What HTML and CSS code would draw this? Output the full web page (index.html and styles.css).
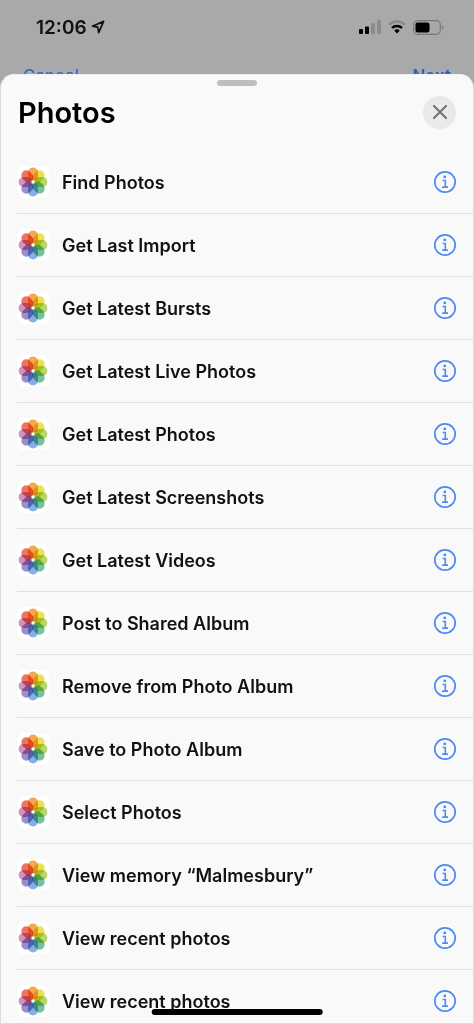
FILE: index.html
```html
<!DOCTYPE html>
<html lang="en">
<head>
  <meta charset="UTF-8" />
  <meta name="viewport" content="width=device-width, initial-scale=1.0"/>
  <title>Photos</title>
  <link rel="stylesheet" href="styles.css">
</head>
<body>
  <svg class="defs" aria-hidden="true">
    <symbol id="photos-icon" viewBox="0 0 32 32">
      <rect width="32" height="32" rx="7" fill="#fff"/>
      <g class="petals">
        <rect x="11" y="1.6" width="10" height="13" rx="5" fill="#f5a850"/>
        <rect x="11" y="1.6" width="10" height="13" rx="5" fill="#ece04e" transform="rotate(45 16 16)"/>
        <rect x="11" y="1.6" width="10" height="13" rx="5" fill="#b9d66c" transform="rotate(90 16 16)"/>
        <rect x="11" y="1.6" width="10" height="13" rx="5" fill="#74c3a0" transform="rotate(135 16 16)"/>
        <rect x="11" y="1.6" width="10" height="13" rx="5" fill="#83b0e6" transform="rotate(180 16 16)"/>
        <rect x="11" y="1.6" width="10" height="13" rx="5" fill="#9c8ec8" transform="rotate(225 16 16)"/>
        <rect x="11" y="1.6" width="10" height="13" rx="5" fill="#cf93bd" transform="rotate(270 16 16)"/>
        <rect x="11" y="1.6" width="10" height="13" rx="5" fill="#ee7566" transform="rotate(315 16 16)"/>
      </g>
    </symbol>
    <symbol id="info-icon" viewBox="0 0 24 24">
      <circle cx="12" cy="12" r="10.2" fill="none" stroke="currentColor" stroke-width="1.7"/>
      <circle cx="11.8" cy="6.9" r="1.4" fill="currentColor"/>
      <path d="M9.6 10.5h2.7v6.6M9.2 17.1h5.8" fill="none" stroke="currentColor" stroke-width="1.6"/>
    </symbol>
  </svg>

  <header class="status-bar">
    <div class="clock">
      <span>12:06</span>
      <svg width="14" height="14" viewBox="0 0 14 14">
        <path d="M12.6 1.4 1.4 6.2l5.4.9.9 5.5z" fill="none" stroke="#111" stroke-width="1.7" stroke-linejoin="round"/>
      </svg>
    </div>
    <div class="indicators">
      <svg width="22" height="14" viewBox="0 0 22 14">
        <rect x="0" y="9" width="4" height="5" rx="1" fill="#000"/>
        <rect x="6" y="6.5" width="4" height="7.5" rx="1" fill="#000"/>
        <rect x="12" y="3" width="4" height="11" rx="1" fill="#8c8c8f"/>
        <rect x="18" y="0" width="4" height="14" rx="1" fill="#8c8c8f"/>
      </svg>
      <svg width="18" height="14" viewBox="0 0 18 14">
        <path d="M1.2 4.6a11.2 11.2 0 0 1 15.6 0" fill="none" stroke="#88888b" stroke-width="2.2"/>
        <path d="M4 8a7.2 7.2 0 0 1 10 0" fill="none" stroke="#000" stroke-width="2.4"/>
        <path d="M6.3 10.6a4 4 0 0 1 5.4 0L9 13.6z" fill="#000"/>
      </svg>
      <svg width="31" height="15" viewBox="0 0 31 15">
        <rect x="0.7" y="0.7" width="26.6" height="13.6" rx="4" fill="none" stroke="#77777a" stroke-width="1.2"/>
        <rect x="2.5" y="2.5" width="14" height="10" rx="2" fill="#000"/>
        <path d="M29 5.2v4.6q1.6-.8 1.6-2.3T29 5.2z" fill="#77777a"/>
      </svg>
    </div>
  </header>

  <nav class="nav-bar">
    <a href="#">Cancel</a>
    <a href="#" class="next">Next</a>
  </nav>

  <main class="sheet">
    <div class="grabber"></div>
    <div class="sheet-header">
      <h1>Photos</h1>
      <button class="close" aria-label="Close">
        <svg width="16" height="16" viewBox="0 0 16 16">
          <path d="M2 2l12 12M14 2L2 14" stroke="#77777a" stroke-width="2.2" stroke-linecap="round"/>
        </svg>
      </button>
    </div>

    <ul class="actions">
      <li>
        <button class="action"><svg class="app-icon"><use href="#photos-icon"/></svg>Find Photos</button>
        <button class="info" aria-label="Info"><svg><use href="#info-icon"/></svg></button>
      </li>
      <li>
        <button class="action"><svg class="app-icon"><use href="#photos-icon"/></svg>Get Last Import</button>
        <button class="info" aria-label="Info"><svg><use href="#info-icon"/></svg></button>
      </li>
      <li>
        <button class="action"><svg class="app-icon"><use href="#photos-icon"/></svg>Get Latest Bursts</button>
        <button class="info" aria-label="Info"><svg><use href="#info-icon"/></svg></button>
      </li>
      <li>
        <button class="action"><svg class="app-icon"><use href="#photos-icon"/></svg>Get Latest Live Photos</button>
        <button class="info" aria-label="Info"><svg><use href="#info-icon"/></svg></button>
      </li>
      <li>
        <button class="action"><svg class="app-icon"><use href="#photos-icon"/></svg>Get Latest Photos</button>
        <button class="info" aria-label="Info"><svg><use href="#info-icon"/></svg></button>
      </li>
      <li>
        <button class="action"><svg class="app-icon"><use href="#photos-icon"/></svg>Get Latest Screenshots</button>
        <button class="info" aria-label="Info"><svg><use href="#info-icon"/></svg></button>
      </li>
      <li>
        <button class="action"><svg class="app-icon"><use href="#photos-icon"/></svg>Get Latest Videos</button>
        <button class="info" aria-label="Info"><svg><use href="#info-icon"/></svg></button>
      </li>
      <li>
        <button class="action"><svg class="app-icon"><use href="#photos-icon"/></svg>Post to Shared Album</button>
        <button class="info" aria-label="Info"><svg><use href="#info-icon"/></svg></button>
      </li>
      <li>
        <button class="action"><svg class="app-icon"><use href="#photos-icon"/></svg>Remove from Photo Album</button>
        <button class="info" aria-label="Info"><svg><use href="#info-icon"/></svg></button>
      </li>
      <li>
        <button class="action"><svg class="app-icon"><use href="#photos-icon"/></svg>Save to Photo Album</button>
        <button class="info" aria-label="Info"><svg><use href="#info-icon"/></svg></button>
      </li>
      <li>
        <button class="action"><svg class="app-icon"><use href="#photos-icon"/></svg>Select Photos</button>
        <button class="info" aria-label="Info"><svg><use href="#info-icon"/></svg></button>
      </li>
      <li>
        <button class="action"><svg class="app-icon"><use href="#photos-icon"/></svg>View memory “Malmesbury”</button>
        <button class="info" aria-label="Info"><svg><use href="#info-icon"/></svg></button>
      </li>
      <li>
        <button class="action"><svg class="app-icon"><use href="#photos-icon"/></svg>View recent photos</button>
        <button class="info" aria-label="Info"><svg><use href="#info-icon"/></svg></button>
      </li>
      <li>
        <button class="action"><svg class="app-icon"><use href="#photos-icon"/></svg>View recent photos</button>
        <button class="info" aria-label="Info"><svg><use href="#info-icon"/></svg></button>
      </li>
    </ul>
  </main>

  <div class="home-indicator"></div>
</body>
</html>
```

FILE: styles.css
```css
* {
  box-sizing: border-box;
}

body {
  margin: 0;
  height: 100vh;
  overflow: hidden;
  display: flex;
  flex-direction: column;
  font-family: Inter, 'Liberation Sans', sans-serif;
  background: #a9a9ab;
  color: #111;
}

button {
  padding: 0;
  border: none;
  background: none;
  font: inherit;
  color: inherit;
  cursor: pointer;
}

.defs {
  position: absolute;
  width: 0;
  height: 0;
}

/* status bar */
.status-bar {
  flex: none;
  height: 54px;
  padding: 0 30px 0 36px;
  display: flex;
  align-items: center;
  justify-content: space-between;
}

.clock {
  display: flex;
  align-items: center;
  gap: 4px;
  font-size: 19px;
  font-weight: 600;
}

.indicators {
  display: flex;
  align-items: center;
  gap: 7px;
}

/* bar behind the sheet */
.nav-bar {
  flex: none;
  height: 44px;
  padding: 0 23px;
  display: flex;
  align-items: center;
  justify-content: space-between;
  font-size: 17px;
}

.nav-bar a {
  color: #2c62c4;
  text-decoration: none;
}

.nav-bar .next {
  font-weight: 600;
}

/* sheet */
.sheet {
  position: relative;
  flex: 1;
  min-height: 0;
  margin-top: -24px;
  overflow: hidden;
  background: #f9f9f9;
  border: 1px solid #dcdcde;
  border-top-color: #f0f0f0;
  border-radius: 14px 14px 0 0;
}

.grabber {
  width: 40px;
  height: 6px;
  margin: 5px auto 0;
  border-radius: 3px;
  background: #bebec2;
}

.sheet-header {
  height: 52px;
  padding: 0 17px;
  display: flex;
  align-items: center;
  justify-content: space-between;
}

h1 {
  margin: 0;
  font-size: 29px;
  font-weight: 600;
  color: #000;
}

.close {
  width: 33px;
  height: 33px;
  display: flex;
  align-items: center;
  justify-content: center;
  border-radius: 50%;
  background: #e9e9ea;
}

.actions {
  margin: 13px 0 0;
  padding: 0 0 0 16px;
  list-style: none;
}

.actions li {
  height: 63px;
  padding-right: 16px;
  display: flex;
  align-items: center;
  border-bottom: 1px solid #e0e0e1;
}

.action {
  flex: 1;
  display: flex;
  align-items: center;
  gap: 13px;
  font-size: 18px;
  font-weight: 600;
  text-align: left;
}

.app-icon {
  width: 32px;
  height: 32px;
}

.petals {
  isolation: isolate;
}

.petals rect {
  mix-blend-mode: multiply;
}

.info {
  color: #4c8af5;
}

.info svg {
  display: block;
  width: 24px;
  height: 24px;
}

.home-indicator {
  position: absolute;
  left: 50%;
  bottom: 9px;
  width: 36%;
  height: 6px;
  transform: translateX(-50%);
  border-radius: 3px;
  background: #000;
}
```
